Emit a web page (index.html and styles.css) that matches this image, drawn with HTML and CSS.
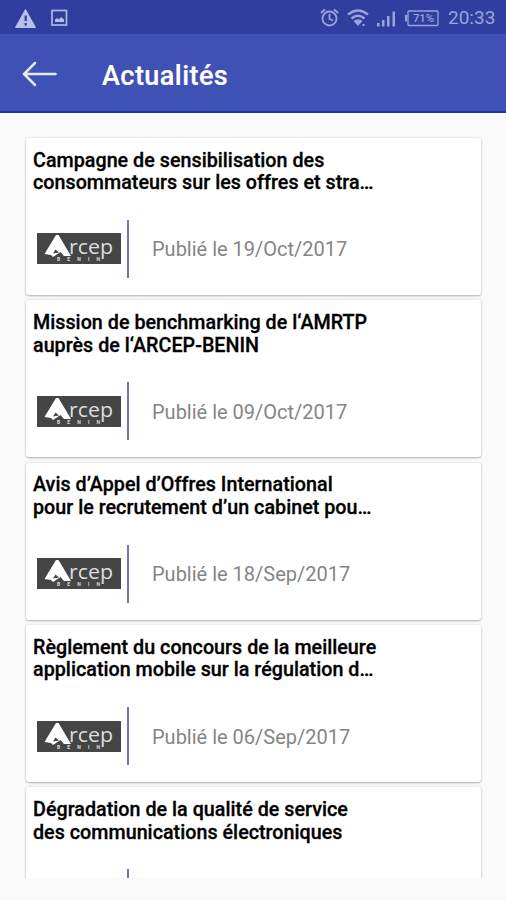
FILE: index.html
```html
<!DOCTYPE html>
<html lang="fr">
<head>
<meta charset="utf-8">
<title>Actualités</title>
<link rel="stylesheet" href="styles.css">
</head>
<body>
<div class="screen">
  <div class="status">
    <svg class="notifications" width="60" height="22" viewBox="0 0 60 22">
      <path d="M10.5 2.5L20.5 20.5H0.5Z" fill="#b9c0e8" stroke="#b9c0e8" stroke-linejoin="round"/>
      <path d="M10.7 8.5V14M10.7 16V18.5" stroke="#303f9f" stroke-width="2.2"/>
      <rect x="37" y="3.500" width="14.5" height="14.5" fill="none" stroke="#a9b1e0" stroke-width="1.8"/>
      <path d="M40 15V12.500L42 11L44 12.500L46 10L49 12.500V15Z" fill="#b9c0e8"/>
    </svg>
    <svg class="indicators" width="122" height="22" viewBox="0 0 122 22">
      <g fill="none" stroke="#99a4db" stroke-width="1.8">
        <circle cx="10.500" cy="11.500" r="7"/>
        <path d="M10.500 7V12L14 13.500M2 6L6 2.500M19 6L15 2.500"/>
        <path d="M29 7.500Q39 -0.500 49 7.500M32.500 11.500Q39 6 45.500 11.500" stroke-width="2.400"/>
        <rect x="89" y="4" width="30" height="14.500" rx="1" stroke-width="1.300"/>
      </g>
      <path d="M34.500 14Q39 10.500 43.500 14L39 19ZM43.500 17h2v2h-2zM58 16h2.500v3.500H58zM63 13h2.500v6.500H63zM68 9h2.500v10.500H68zM73.500 4.500H76v15h-2.500zM86 8h2v6.500h-2z" fill="#99a4db"/>
      <text class="battery" x="94" y="15.300" textLength="21" lengthAdjust="spacingAndGlyphs">71%</text>
    </svg>
    <span class="clock">20:33</span>
  </div>
  <header class="bar">
    <svg width="36" height="28" viewBox="0 0 36 28" fill="none" stroke="#e4e7fa" stroke-width="2.500" stroke-linecap="round"><path d="M2.500 14H33.500M13 3L2 14L13 25"/></svg>
    <h1>Actualités</h1>
  </header>
  <main class="list">
    <article class="card">
      <h2><span>Campagne de sensibilisation des</span><span>consommateurs sur les offres et stra…</span></h2>
      <div class="meta">
        <svg class="logo" viewBox="0 0 84 31"><path d="M7.500 21L19 2H21.500L34 23H27L23.500 19L16 24L14 22Z" fill="#fff"/><path d="M18.500 16.500L16 20.500L22 19.500Z" fill="#454545"/><text class="logo-name" x="32" y="21" textLength="44" lengthAdjust="spacingAndGlyphs">rcep</text><text class="logo-country" x="20" y="28" textLength="43">BENIN</text></svg>
        <i></i><time>Publié le 19/Oct/2017</time>
      </div>
    </article>
    <article class="card">
      <h2><span>Mission de benchmarking de l‘AMRTP</span><span>auprès de l‘ARCEP-BENIN</span></h2>
      <div class="meta">
        <svg class="logo" viewBox="0 0 84 31"><path d="M7.500 21L19 2H21.500L34 23H27L23.500 19L16 24L14 22Z" fill="#fff"/><path d="M18.500 16.500L16 20.500L22 19.500Z" fill="#454545"/><text class="logo-name" x="32" y="21" textLength="44" lengthAdjust="spacingAndGlyphs">rcep</text><text class="logo-country" x="20" y="28" textLength="43">BENIN</text></svg>
        <i></i><time>Publié le 09/Oct/2017</time>
      </div>
    </article>
    <article class="card">
      <h2><span>Avis d’Appel d’Offres International</span><span>pour le recrutement d’un cabinet pou…</span></h2>
      <div class="meta">
        <svg class="logo" viewBox="0 0 84 31"><path d="M7.500 21L19 2H21.500L34 23H27L23.500 19L16 24L14 22Z" fill="#fff"/><path d="M18.500 16.500L16 20.500L22 19.500Z" fill="#454545"/><text class="logo-name" x="32" y="21" textLength="44" lengthAdjust="spacingAndGlyphs">rcep</text><text class="logo-country" x="20" y="28" textLength="43">BENIN</text></svg>
        <i></i><time>Publié le 18/Sep/2017</time>
      </div>
    </article>
    <article class="card">
      <h2><span>Règlement du concours de la meilleure</span><span>application mobile sur la régulation d…</span></h2>
      <div class="meta">
        <svg class="logo" viewBox="0 0 84 31"><path d="M7.500 21L19 2H21.500L34 23H27L23.500 19L16 24L14 22Z" fill="#fff"/><path d="M18.500 16.500L16 20.500L22 19.500Z" fill="#454545"/><text class="logo-name" x="32" y="21" textLength="44" lengthAdjust="spacingAndGlyphs">rcep</text><text class="logo-country" x="20" y="28" textLength="43">BENIN</text></svg>
        <i></i><time>Publié le 06/Sep/2017</time>
      </div>
    </article>
    <article class="card">
      <h2><span>Dégradation de la qualité de service</span><span>des communications électroniques</span></h2>
      <div class="meta"><b></b><i></i></div>
    </article>
  </main>
</div>
</body>
</html>
```
FILE: styles.css
```css
* { box-sizing: border-box; }
body { margin: 0; font-family: Roboto, "Liberation Sans", sans-serif; }
.screen { height: 900px; overflow: hidden; background: #fafafa; }
.status {
  display: flex;
  align-items: center;
  height: 34px;
  padding: 1px 11px 0 15px;
  background: #303f9f;
  color: #99a4db;
}
.indicators { margin-left: auto; }
.clock { width: 47px; margin-left: 7px; padding-top: 1px; font-size: 19px; line-height: 22px; white-space: nowrap; }
.battery { font-size: 11.5px; font-weight: 500; fill: #99a4db; }
.bar {
  display: flex;
  align-items: center;
  height: 79px;
  padding: 2px 22px 0;
  background: #3f51b5;
  border-bottom: 2px solid #1c35a4;
}
.bar h1 { margin: 5px 0 0 44px; color: #fff; font-size: 27px; line-height: 32px; font-weight: 500; letter-spacing: .45px; -webkit-text-stroke: .2px; }
.list { height: 765px; padding: 25px 25px 0 26px; overflow: hidden; }
.card {
  height: 157px;
  margin-bottom: 5.35px;
  padding: 11.7px 7px 0;
  background: #fff;
  border-radius: 3px;
  box-shadow: 0 1px 2px rgba(0,0,0,.25), 0 0 3px rgba(0,0,0,.12);
}
.card h2 { margin: 0; font-size: 19.7px; line-height: 22.5px; font-weight: 500; letter-spacing: .03px; color: #000; -webkit-text-stroke: .3px #000; }
.card h2 span { display: block; white-space: nowrap; }
.meta { display: flex; align-items: center; height: 58px; margin-top: 25.3px; padding-left: 4px; }
.logo { display: block; width: 84px; height: 31px; background: #454545; }
.meta b { width: 84px; }
.meta i { width: 2px; height: 58px; margin-left: 6px; background: #7771bd; }
.meta time { margin: 1px 0 0 23px; color: #858585; font-size: 20px; line-height: 24px; white-space: nowrap; }
.logo-name { font-family: "Open Sans", sans-serif; font-size: 20px; fill: #ddd; }
.logo-country { font-family: Roboto, sans-serif; font-size: 5px; font-weight: 700; fill: #ddd; }
```
